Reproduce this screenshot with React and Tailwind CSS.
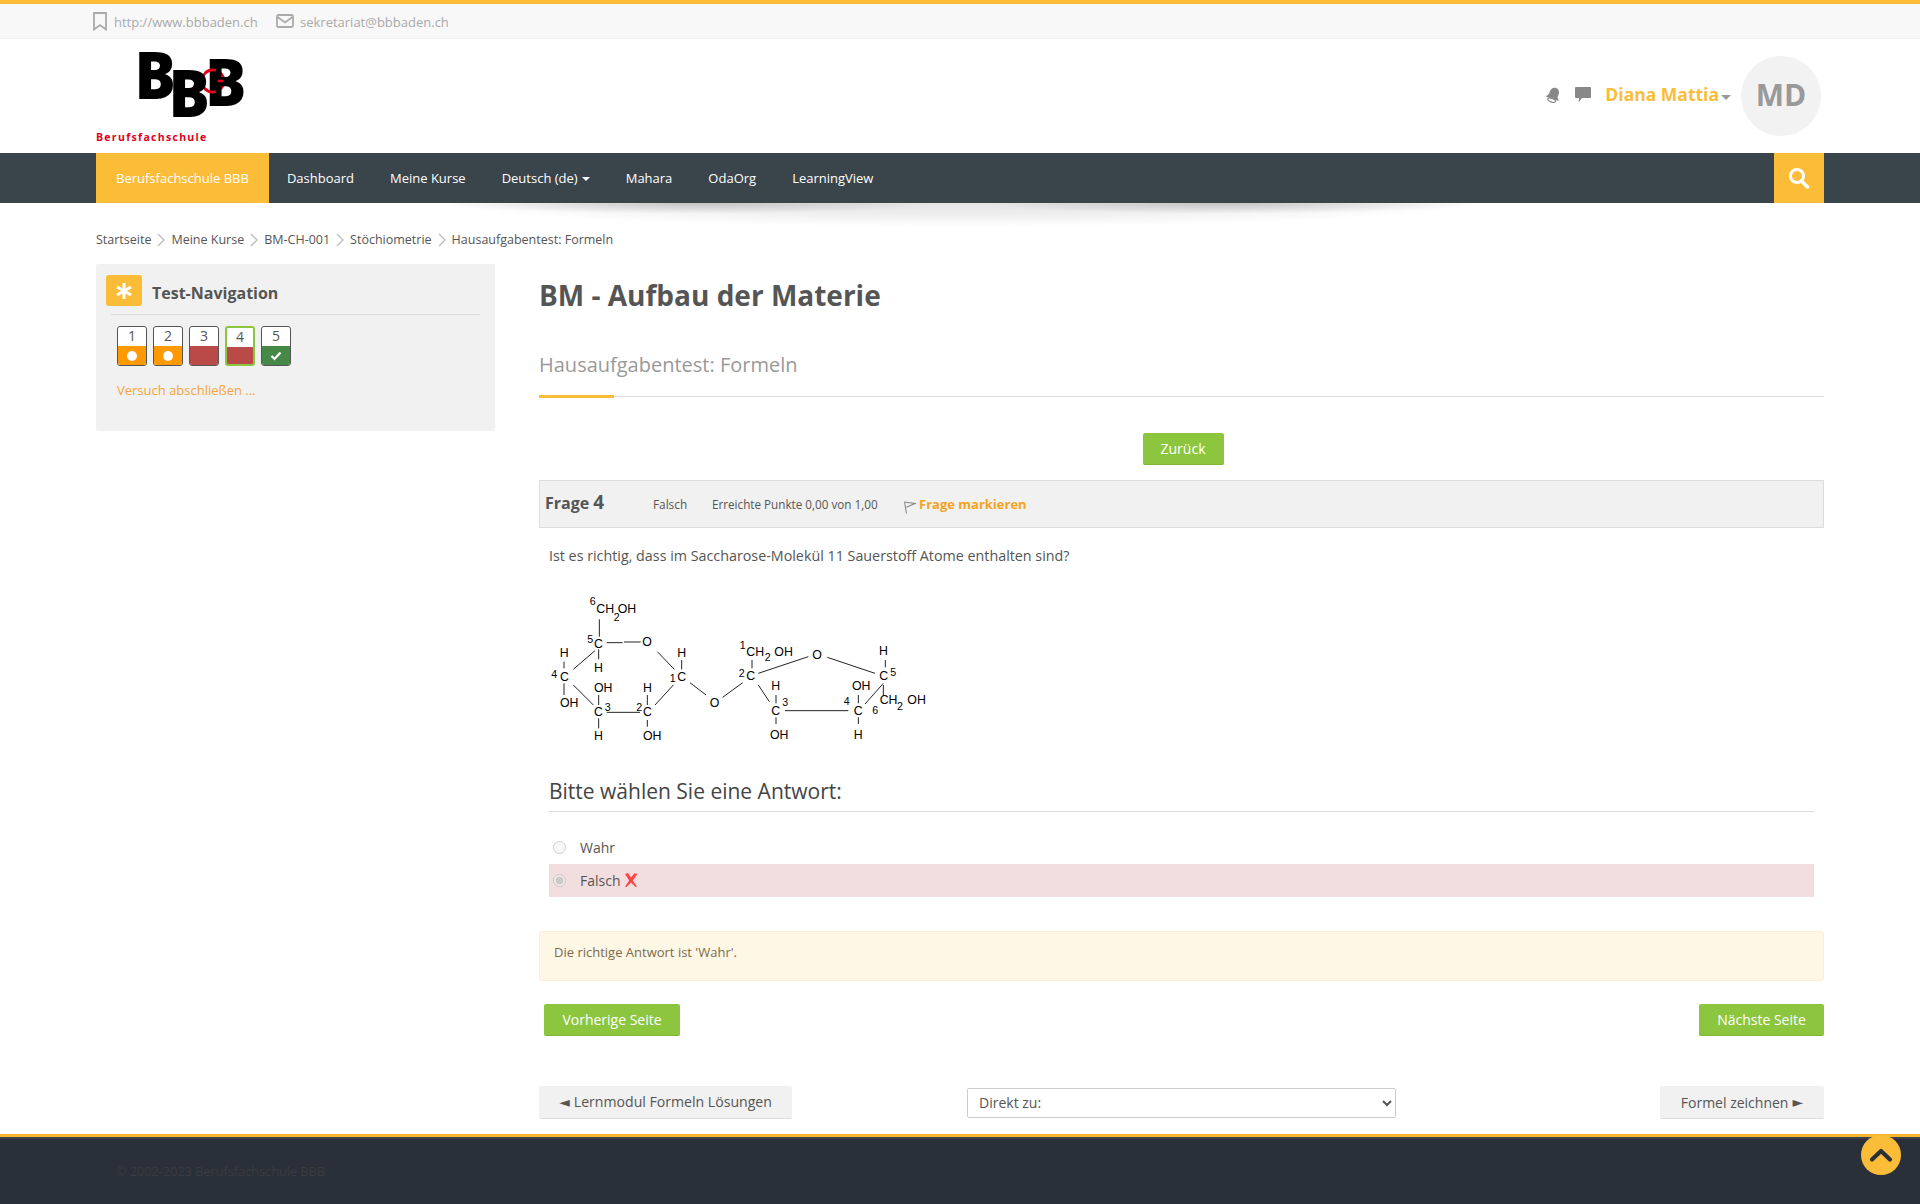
import React from "react";

function L({ p }) {
  return <line x1={p[0]} y1={p[1]} x2={p[2]} y2={p[3]} stroke="#000" strokeWidth="2.6" />;
}
const lines = [
  [178,118,178,170],[200,188,248,188],[252,186,302,186],[72,245,72,265],[100,268,165,212],[176,208,176,238],
  [72,310,72,345],[100,315,160,375],[176,345,176,375],[176,415,176,445],[200,397,300,397],[322,345,322,375],
  [322,420,322,440],[345,375,400,315],[425,240,425,268],[352,215,403,268],[450,308,498,345],[548,352,608,308],
  [636,240,636,265],[655,280,805,230],[862,232,1005,280],[1036,240,1036,262],[1030,310,975,372],[1030,315,1030,345],
  [955,345,955,370],[955,412,955,432],[708,345,708,370],[655,315,688,365],[735,392,925,392],[708,412,708,432],
];
const big = [
  ["CH",169,98],["OH",233,98],["C",162,203],["O",307,198],["H",59,232],["C",60,304],["H",162,275],["OH",60,380],
  ["OH",162,335],["C",162,409],["H",162,480],["C",309,409],["H",309,335],["OH",309,480],["C",412,304],["H",412,230],
  ["O",509,382],["CH",619,228],["OH",703,228],["C",619,299],["O",817,238],["H",1017,225],["C",1018,301],["CH",1019,373],
  ["OH",1102,373],["OH",936,330],["C",941,406],["H",941,478],["H",694,330],["C",694,406],["OH",690,477],
];
const small = [
  ["6",149,75],["2",221,122],["5",142,189],["4",34,294],["3",194,392],["2",289,392],["1",389,307],["1",599,207],
  ["2",674,244],["2",596,290],["5",1051,287],["2",1071,390],["6",997,402],["4",911,375],["3",727,377],
];

function Molecule() {
  return (
    <svg width="400" height="170" viewBox="0 0 1200 510" className="block">
      {lines.map((p, i) => <L key={i} p={p} />)}
      {big.map(([t, x, y], i) => (
        <text key={i} x={x} y={y} fontSize="37" fontFamily="'Liberation Sans', sans-serif" fill="#000">{t}</text>
      ))}
      {small.map(([t, x, y], i) => (
        <text key={i} x={x} y={y} fontSize="32" fontFamily="'Liberation Sans', sans-serif" fill="#000">{t}</text>
      ))}
    </svg>
  );
}

function Logo() {
  const b = { fontFamily: "'Open Sans', sans-serif", fontWeight: 800, fontSize: 66, fill: "#000" };
  return (
    <svg width="150" height="114" viewBox="0 0 150 114" className="block">
      <circle cx="117" cy="42" r="11" fill="none" stroke="#e2001a" strokeWidth="2.5" />
      <text transform="translate(38.5,60) scale(0.93,1)" style={b}>B</text>
      <text transform="translate(109,67) scale(0.93,1)" style={b}>B</text>
      <path d="M109 34A11 11 0 0 1 120 31.500M109 50A11 11 0 0 0 120 52.500M121.500 42H127.500" fill="none" stroke="#e2001a" strokeWidth="2.5" />
      <text transform="translate(72.5,78) scale(0.93,1)" style={b}>B</text>
      <text x="0" y="102" fontFamily="'Open Sans', sans-serif" fontWeight="700" fontSize="10.5" letterSpacing="1.3" fill="#e2001a">Berufsfachschule</text>
    </svg>
  );
}

const Chev = () => (
  <svg width="8" height="14" viewBox="0 0 8 14" className="mx-[6px]">
    <path d="M1 1l6 6-6 6" fill="none" stroke="#bbb" strokeWidth="1.3" />
  </svg>
);

function QBox({ n, color, mark, active }) {
  return (
    <div className={active
      ? "w-[30px] h-10 rounded-[3px] border-2 border-[#8cc63f] overflow-hidden flex flex-col bg-white"
      : "w-[30px] h-10 rounded-[3px] border border-[#555] overflow-hidden flex flex-col bg-white"}>
      <div className="h-[19px] flex items-center justify-center text-[14px] leading-none text-[#555] shrink-0 pb-[2px]">{n}</div>
      <div className={`flex-1 flex items-center justify-center ${color}`}>
        {mark === "dot" && <span className="w-[10px] h-[10px] rounded-full bg-white" />}
        {mark === "check" && (
          <svg width="12" height="10" viewBox="0 0 12 10"><path d="M1.5 5l3 3 6-6.5" fill="none" stroke="#fff" strokeWidth="2.2" /></svg>
        )}
      </div>
    </div>
  );
}

const Btn = ({ children, w }) => (
  <button className={`h-8 ${w} px-[18px] bg-[#8cc63f] text-white text-[14px] rounded-[2px] border-b border-[#7fb539] whitespace-nowrap`}>{children}</button>
);

const Tri = ({ children }) => <span style={{ fontFamily: "'DejaVu Sans', sans-serif" }} className="text-[14px]">{children}</span>;

export default function App() {
  return (
    <div className="min-h-[1204px] flex flex-col bg-white text-[#555] relative overflow-hidden" style={{ fontFamily: "'Open Sans', sans-serif" }}>
      {/* top strip */}
      <div className="h-[39px] bg-[#f8f8f8] border-t-4 border-b border-t-[#fbbd38] border-b-[#eeeeee]">
        <div className="w-[1728px] mx-auto h-full flex items-center text-[13px] text-[#aaaaaa] pt-[3px]">
          <svg width="14" height="19" viewBox="0 0 14 19" className="-ml-[3px] mr-[7px] -mt-[2px]"><path d="M1 1h12v16.5l-6-4.5-6 4.500z" fill="none" stroke="#aaa" strokeWidth="1.8" /></svg>
          <span className="mr-[19px] w-[143px] whitespace-nowrap">http://www.bbbaden.ch</span>
          <svg width="18" height="14" viewBox="0 0 18 14" className="mr-[6px] -mt-[4px]"><rect x="1" y="1" width="16" height="12" rx="1.5" fill="none" stroke="#aaa" strokeWidth="1.8" /><path d="M1.5 3L9 8.5 16.5 3" fill="none" stroke="#aaa" strokeWidth="1.8" /></svg>
          <span className="whitespace-nowrap">sekretariat@bbbaden.ch</span>
        </div>
      </div>

      {/* header */}
      <div className="h-[114px] w-[1728px] mx-auto flex items-center">
        <Logo />
        <div className="ml-auto flex items-center pr-[3px]">
          <svg width="17" height="18" viewBox="0 0 17 18" className="mr-[13px] -mt-[2px]">
            <g transform="rotate(20 8.5 9)">
              <path d="M8.5 1.5c-3 0-4.6 2.400-4.600 5v3.200L1.600 13h13.800l-2.300-3.300V6.500c0-2.600-1.600-5-4.600-5z" fill="#888" />
              <ellipse cx="8.5" cy="14.5" rx="4" ry="1.8" fill="#fff" stroke="#888" strokeWidth="1.2" />
            </g>
          </svg>
          <svg width="16" height="16" viewBox="0 0 16 16" className="mr-[14px] -mt-[3px]"><path d="M1 0h14a1 1 0 0 1 1 1v9a1 1 0 0 1-1 1H7l-3.500 4.500L4 11H1a1 1 0 0 1-1-1V1a1 1 0 0 1 1-1z" fill="#888" /></svg>
          <span className="text-[17.5px] font-bold text-[#fbbd38] leading-none whitespace-nowrap -mt-[2px]">Diana Mattia</span>
          <span className="ml-[2px] mt-[3px] w-0 h-0 border-x-[5px] border-x-transparent border-t-[5px] border-t-[#999]" />
          <div className="ml-[10px] w-20 h-20 rounded-full bg-[#f2f2f2] flex items-center justify-center text-[30px] font-bold text-[#999999] pb-[3px]">MD</div>
        </div>
      </div>

      {/* nav */}
      <div className="h-[50px] bg-[#3a454b] relative">
        <div className="w-[1728px] mx-auto h-full flex items-center text-white text-[13px]">
          <div className="h-full bg-[#fbbd38] px-5 pt-[2px] flex items-center whitespace-nowrap">Berufsfachschule BBB</div>
          <div className="flex items-center ml-[18px] pt-[2px] gap-9 whitespace-nowrap">
            <span>Dashboard</span>
            <span>Meine Kurse</span>
            <span className="flex items-center">Deutsch (de)<span className="ml-[4px] w-0 h-0 border-x-[4px] border-x-transparent border-t-[4px] border-t-white" /></span>
            <span>Mahara</span>
            <span>OdaOrg</span>
            <span>LearningView</span>
          </div>
          <div className="ml-auto w-[50px] h-full bg-[#fbbd38] flex items-center justify-center">
            <svg width="22" height="22" viewBox="0 0 22 22"><circle cx="9" cy="9" r="6.5" fill="none" stroke="#fff" strokeWidth="3" /><path d="M13.5 14l6 6" stroke="#fff" strokeWidth="3.5" strokeLinecap="round" /></svg>
          </div>
        </div>
        <div className="absolute top-full left-1/2 -translate-x-1/2 w-[1040px] h-[24px] bg-[radial-gradient(ellipse_50%_100%_at_50%_0%,rgba(0,0,0,0.1),rgba(0,0,0,0.07)_45%,rgba(0,0,0,0)_100%),radial-gradient(ellipse_24%_45%_at_24%_0%,rgba(0,0,0,0.18),rgba(0,0,0,0)_100%),radial-gradient(ellipse_24%_45%_at_76%_0%,rgba(0,0,0,0.18),rgba(0,0,0,0)_100%)]" />
      </div>

      {/* breadcrumb */}
      <div className="w-[1728px] mx-auto mt-[28px] h-[18px] flex items-center text-[12.5px] text-[#555] whitespace-nowrap">
        <span>Startseite</span><Chev /><span>Meine Kurse</span><Chev /><span>BM-CH-001</span><Chev /><span>Stöchiometrie</span><Chev /><span>Hausaufgabentest: Formeln</span>
      </div>

      {/* content */}
      <div className="w-[1728px] mx-auto mt-[15px] flex items-start">
        <aside className="w-[399px] h-[167px] bg-[#f1f1f1] rounded-[2px] shrink-0 px-[10px] pt-[11px]">
          <div className="flex items-center h-[31px] mb-[8px]">
            <div className="w-9 h-[31px] bg-[#fbbd38] rounded-[3px] flex items-center justify-center">
              <svg width="18" height="18" viewBox="0 0 18 18"><path d="M9 1v16M2 5l14 8M2 13l14-8" stroke="#fff" strokeWidth="3" /></svg>
            </div>
            <h3 className="ml-[10px] mt-[5px] text-[16px] font-bold text-[#555] leading-none">Test-Navigation</h3>
          </div>
          <div className="mx-[5px] border-t border-[#dddddd]" />
          <div className="ml-[11px] mt-[11px] flex gap-[6px]">
            <QBox n="1" color="bg-[#ff9900]" mark="dot" />
            <QBox n="2" color="bg-[#ff9900]" mark="dot" />
            <QBox n="3" color="bg-[#b94a48]" />
            <QBox n="4" color="bg-[#b94a48]" active />
            <QBox n="5" color="bg-[#468847]" mark="check" />
          </div>
          <div className="ml-[11px] mt-[15px] text-[13px] leading-[18px] text-[#f5a53c]">Versuch abschließen ...</div>
        </aside>

        <main className="ml-[44px] w-[1285px]">
          <h1 className="text-[28px] font-bold text-[#555] leading-[38px] mt-[12px]">BM - Aufbau der Materie</h1>
          <div className="mt-[37px] text-[20px] text-[#999] leading-[28px]">Hausaufgabentest: Formeln</div>
          <div className="relative mt-[17px] border-t border-[#dddddd]">
            <div className="absolute -top-[2px] left-0 w-[75px] h-[3px] bg-[#fbbd38]" />
          </div>

          <div className="mt-[36px] flex justify-center pl-[3px]"><Btn w="w-[81px]">Zurück</Btn></div>

          <div className="mt-[15px] h-[48px] bg-[#f1f1f1] border border-[#dddddd] flex items-center pl-[5px] whitespace-nowrap">
            <span className="font-bold text-[16px] text-[#555] w-[108px] -mt-[3px]">Frage <span className="text-[19px]">4</span></span>
            <span className="text-[11.8px] w-[59px] mt-[1px]">Falsch</span>
            <span className="text-[11.7px] w-[191px] mt-[1px]">Erreichte Punkte 0,00 von 1,00</span>
            <svg width="13" height="14" viewBox="0 0 13 14" className="mr-[3px] mt-[6px]"><path d="M1 2l11 1.5L5 6.500 3.500 7.300M1.500 2L3.500 13.500" fill="none" stroke="#888" strokeWidth="1.1" /></svg>
            <span className="text-[13px] font-bold text-[#f5a31e] mt-[1px]">Frage markieren</span>
          </div>

          <div className="px-[10px]">
            <p className="mt-[18px] text-[14.3px] leading-[20px] text-[#555]">Ist es richtig, dass im Saccharose-Molekül 11 Sauerstoff Atome enthalten sind?</p>
            <div className="-ml-[9px] mt-[14px]"><Molecule /></div>

            <div className="mt-[27px] text-[21px] leading-[28px] text-[#444]">Bitte wählen Sie eine Antwort:</div>
            <div className="mt-[6px] border-t border-[#dddddd]" />

            <div className="mt-[19px] h-[33px] flex items-center pl-[4px] text-[14px] text-[#555]">
              <input type="radio" disabled className="w-[13px] h-[13px] m-0" />
              <span className="ml-[14px] -mt-[1px]">Wahr</span>
            </div>
            <div className="h-[33px] flex items-center pl-[4px] text-[14px] text-[#555] bg-[#f2dede]">
              <input type="radio" disabled defaultChecked className="w-[13px] h-[13px] m-0" />
              <span className="ml-[14px] -mt-[1px]">Falsch</span>
              <svg width="14" height="14" viewBox="0 0 14 14" className="ml-[3px] -mt-[1px]"><path d="M1 1l3-1 3 4.500L10.500.2l3 .8L8.800 7.500 13 13.800 11.500 14 7 9.500 2.500 14 1 13.600 5.200 7.500z" fill="#f44" /></svg>
            </div>
          </div>

          <div className="mt-[34px] h-[50px] bg-[#fef7e5] border border-[#fbeed5] rounded-[3px] px-[14px] pt-[11px] text-[13px] leading-[18px] text-[#7d6b4a]">Die richtige Antwort ist &#39;Wahr&#39;.</div>

          <div className="mt-[23px] flex justify-between pl-[5px]">
            <Btn w="w-[136px]">Vorherige Seite</Btn>
            <Btn w="w-[125px]">Nächste Seite</Btn>
          </div>

          <div className="mt-[50px] flex items-center">
            <div className="h-[33px] w-[253px] bg-[#f1f1f1] border-b border-[#dddddd] rounded-[2px] flex items-center justify-center gap-[4px] text-[14.1px] text-[#555] whitespace-nowrap"><Tri>◄</Tri><span>Lernmodul Formeln Lösungen</span></div>
            <select className="w-[429px] h-[30px] bg-white border border-[#cccccc] rounded-[2px] px-[7px] text-[14px] text-[#555] ml-[175px]">
              <option>Direkt zu:</option>
            </select>
            <div className="ml-auto h-[33px] w-[164px] bg-[#f1f1f1] border-b border-[#dddddd] rounded-[2px] flex items-center justify-center gap-[4px] text-[14px] text-[#555] whitespace-nowrap"><span>Formel zeichnen</span><Tri>►</Tri></div>
          </div>
        </main>
      </div>

      {/* footer */}
      <footer className="mt-[15px] flex-1 min-h-[70px] bg-[#2a303a] border-t-[3px] border-[#fbb52f] relative">
        <div className="h-[2px] bg-[#3a414c]" />
        <div className="w-[1728px] mx-auto pl-5 mt-[22px] text-[12.7px] leading-[20px] text-[#3a3b3d]">© 2002-2023 Berufsfachschule BBB</div>
        <div className="absolute right-[19px] -top-[2px] w-10 h-10 rounded-full bg-[#fbbd38] flex items-center justify-center">
          <svg width="24" height="16" viewBox="0 0 24 16"><path d="M3 12.5l9-8.500 9 8.500" fill="none" stroke="#2a303a" strokeWidth="4.2" strokeLinecap="round" strokeLinejoin="round" /></svg>
        </div>
      </footer>
    </div>
  );
}
